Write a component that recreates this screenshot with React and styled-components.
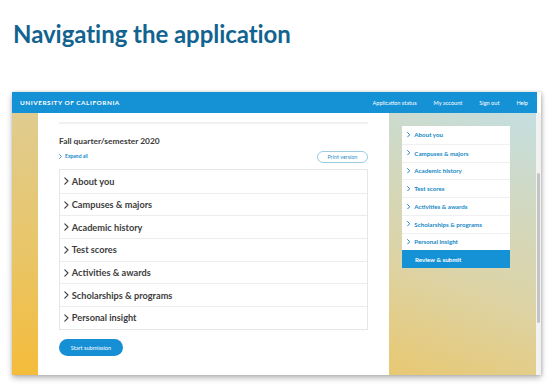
import React from "react";
import styled, { createGlobalStyle } from "styled-components";

const GlobalStyle = createGlobalStyle`
  html, body {
    margin: 0;
    padding: 0;
    background: #fff;
    font-family: Lato, "Open Sans", sans-serif;
  }
`;

const Page = styled.div`
  width: 554px;
  height: 384px;
  overflow: hidden;
  padding: 19px 0 0 13px;
  box-sizing: border-box;
`;

const Title = styled.h1`
  margin: 0;
  font-size: 24px;
  font-weight: 700;
  color: #12638f;
  letter-spacing: -0.05px;
  line-height: 30px;
`;

const Window = styled.div`
  margin: 43px 0 0 -1px;
  width: 529px;
  height: 283px;
  display: flex;
  flex-direction: column;
  box-shadow: 0 3px 6px rgba(0, 0, 0, 0.28), 1px 0 3px rgba(0, 0, 0, 0.15);
  background: #fff;
`;

const TopBar = styled.header`
  height: 21px;
  flex: none;
  background: #1592d6;
  display: flex;
  align-items: center;
  justify-content: space-between;
  padding: 0 9px 0 8px;
  color: #fff;
  margin-right: 4px;
`;

const Brand = styled.div`
  font-size: 6.4px;
  font-weight: 700;
  letter-spacing: 0.55px;
`;

const TopLinks = styled.nav`
  display: flex;
  gap: 17px;
  font-size: 5.6px;
`;

const Body = styled.div`
  flex: 1;
  display: flex;
  min-height: 0;
`;

const Strip = styled.div`
  width: 26px;
  flex: none;
  background: linear-gradient(180deg, #dfcc90 0%, #e9c566 55%, #f4bc3a 100%);
`;

const Main = styled.main`
  width: 351px;
  flex: none;
  padding: 9px 0 0 21px;
  box-sizing: border-box;
`;

const Rule = styled.div`
  width: 309px;
  height: 2px;
  background: #f0f0f0;
`;

const Term = styled.h2`
  margin: 11px 0 0;
  font-size: 8.4px;
  font-weight: 700;
  color: #3a3a3a;
  line-height: 12px;
`;

const Tools = styled.div`
  width: 309px;
  display: flex;
  justify-content: space-between;
  align-items: flex-end;
  margin-top: 4px;
`;

const ExpandAll = styled.span`
  font-size: 5px;
  color: #1488c8;
  font-weight: 700;
  display: flex;
  align-items: center;
  gap: 3px;
  margin-bottom: 4px;
`;

const PrintButton = styled.button`
  font-family: inherit;
  font-size: 5.4px;
  color: #2f8fc4;
  background: #fff;
  border: 1px solid #9ccbe4;
  border-radius: 7px;
  width: 51px;
  height: 12px;
  padding: 0;
`;

const Accordion = styled.div`
  margin-top: 6px;
  width: 309px;
  border: 1px solid #e6e6e6;
  box-sizing: border-box;
`;

const Row = styled.div`
  height: 22.7px;
  display: flex;
  align-items: center;
  padding-left: 4px;
  gap: 3px;
  font-size: 9.2px;
  font-weight: 700;
  color: #3c3c3c;
  box-sizing: border-box;
  border-top: ${({ first }) => (first ? "none" : "1.5px solid #ececec")};
`;

const StartButton = styled.button`
  margin-top: 9px;
  width: 64px;
  height: 17px;
  border: none;
  border-radius: 9px;
  background: #168fd5;
  color: #fff;
  font-family: inherit;
  font-size: 5.6px;
  padding: 0;
`;

const Side = styled.aside`
  flex: 1;
  padding: 13px 0 0 13px;
  background:
    linear-gradient(20deg, #e8c872 0%, #dcd4a8 40%, #d3d8bd 65%, #c4dee0 100%);
`;

const NavCard = styled.div`
  width: 108px;
  background: #fff;
`;

const NavItem = styled.div`
  height: 17.75px;
  box-sizing: border-box;
  display: flex;
  align-items: center;
  gap: 4px;
  padding-left: 5px;
  font-size: 6.2px;
  font-weight: 700;
  color: ${({ active }) => (active ? "#fff" : "#1789c6")};
  background: ${({ active }) => (active ? "#1592d6" : "#fff")};
  border-top: ${({ first, active }) =>
    first || active ? "none" : "1px solid #f0f0f0"};
`;

const Spacer = styled.span`
  width: 4px;
`;

const Scroll = styled.div`
  width: 5px;
  flex: none;
  background: #f2f2f2;
  position: relative;
`;

const Thumb = styled.div`
  position: absolute;
  left: 1px;
  right: 1px;
  top: 60px;
  height: 150px;
  background: #c4c4c4;
  border-radius: 2px;
`;

function Chevron({ size = 6, color = "currentColor", weight = 1.4 }) {
  return (
    <svg width={size * 0.6} height={size} viewBox="0 0 6 10" fill="none">
      <path
        d="M1 1l4 4-4 4"
        stroke={color}
        strokeWidth={weight * (10 / size)}
        strokeLinecap="round"
        strokeLinejoin="round"
      />
    </svg>
  );
}

const sections = [
  "About you",
  "Campuses & majors",
  "Academic history",
  "Test scores",
  "Activities & awards",
  "Scholarships & programs",
  "Personal insight",
];

export default function App() {
  return (
    <>
      <GlobalStyle />
      <Page>
        <Title>Navigating the application</Title>
        <Window>
          <TopBar>
            <Brand>UNIVERSITY OF CALIFORNIA</Brand>
            <TopLinks>
              <span>Application status</span>
              <span>My account</span>
              <span>Sign out</span>
              <span>Help</span>
            </TopLinks>
          </TopBar>
          <Body>
            <Strip />
            <Main>
              <Rule />
              <Term>Fall quarter/semester 2020</Term>
              <Tools>
                <ExpandAll>
                  <Chevron size={5} weight={0.8} />
                  Expand all
                </ExpandAll>
                <PrintButton>Print version</PrintButton>
              </Tools>
              <Accordion>
                {sections.map((s, i) => (
                  <Row key={s} first={i === 0}>
                    <Chevron size={8} weight={1.1} />
                    {s}
                  </Row>
                ))}
              </Accordion>
              <StartButton>Start submission</StartButton>
            </Main>
            <Side>
              <NavCard>
                {sections.map((s, i) => (
                  <NavItem key={s} first={i === 0}>
                    <Chevron size={5.5} weight={1} />
                    {s}
                  </NavItem>
                ))}
                <NavItem active>
                  <Spacer />
                  Review &amp; submit
                </NavItem>
              </NavCard>
            </Side>
            <Scroll>
              <Thumb />
            </Scroll>
          </Body>
        </Window>
      </Page>
    </>
  );
}
